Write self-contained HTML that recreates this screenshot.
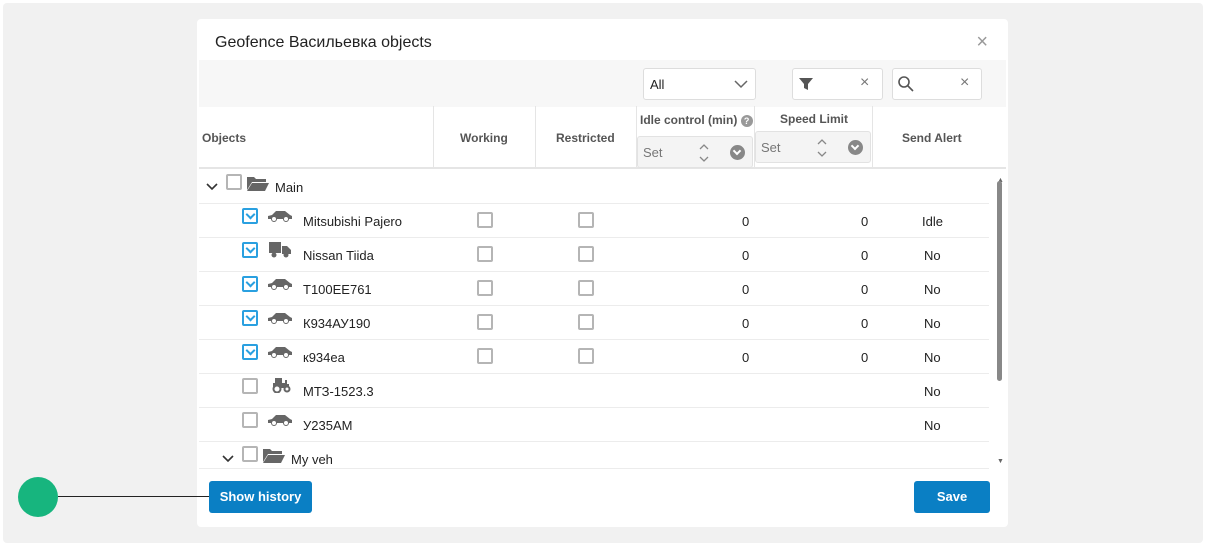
<!DOCTYPE html>
<html><head><meta charset="utf-8"><style>
*{box-sizing:border-box;margin:0;padding:0}
body{width:1206px;height:546px;background:#fff;font-family:"Liberation Sans",sans-serif;position:relative;overflow:hidden;color:#222}
.panel{position:absolute;left:3px;top:3px;width:1200px;height:540px;background:#f1f1f1;border-radius:4px}
.modal{position:absolute;left:197px;top:19px;width:811px;height:508px;background:#fff;border-radius:4px}
.abs{position:absolute}
.title{left:18px;top:15px;font-size:16px;color:#222}
.close{right:20px;top:12px;font-size:20px;color:#999}
.tool{left:2px;top:41px;width:807px;height:47px;background:#f7f7f7}
.box{position:absolute;background:#fff;border:1px solid #ddd;border-radius:3px;height:32px;top:49px}
.hdr{left:2px;top:87px;width:807px;height:63px;border-bottom:2px solid #e5e5e5}
.hc{position:absolute;font-size:12px;color:#555;font-weight:bold}
.vl{position:absolute;top:87px;height:62px;width:1px;background:#e5e5e5}
.set{position:absolute;background:#f4f4f4;border:1px solid #e2e2e2;border-radius:3px;height:32px;font-size:13px;color:#777}
.row{position:absolute;left:2px;width:790px;height:34px;border-bottom:1px solid #ececec;font-size:13px}
.cb{position:absolute;width:16px;height:16px;border:2px solid #b5b5b5;border-radius:2px;background:#fff}
.cbc{border-color:#2aa0e0}
.cbc::after{content:"";position:absolute;left:3px;top:1px;width:5px;height:5px;border-right:2px solid #2aa0e0;border-bottom:2px solid #2aa0e0;transform:rotate(45deg)}
.btn{position:absolute;background:#0a7fc4;color:#fff;font-size:13px;font-weight:bold;border-radius:3px;text-align:center;line-height:32px;height:32px}
.ud{position:absolute;left:60px;top:6px}
.dc{position:absolute;left:92px;top:8px;width:15px;height:15px;border-radius:50%;background:#888}
.dc::after{content:"";position:absolute;left:4px;top:3px;width:4px;height:4px;border-right:2px solid #fff;border-bottom:2px solid #fff;transform:rotate(45deg)}
</style></head><body>
<div class="panel"></div>
<div class="modal">
<div class="abs title">Geofence Васильевка objects</div>
<div class="abs close">×</div>
<div class="abs tool"></div>
<div class="box" style="left:446px;width:113px"><span class="abs" style="left:6px;top:8px;font-size:13px">All</span><svg class="abs" style="left:90px;top:10px" width="14" height="10"><path d="M1 2l6 6 6-6" stroke="#666" fill="none" stroke-width="1.5"/></svg></div>
<div class="box" style="left:595px;width:91px"><svg class="abs" style="left:6px;top:8px" width="14" height="14"><path d="M0 1h14l-5 6v6l-4-2v-4z" fill="#555"/></svg><span class="abs" style="left:67px;top:5px;color:#777;font-size:16px">×</span></div>
<div class="box" style="left:695px;width:90px"><svg class="abs" style="left:5px;top:7px" width="16" height="16"><circle cx="6" cy="6" r="5" stroke="#555" stroke-width="1.6" fill="none"/><path d="M10 10l5 5" stroke="#555" stroke-width="1.6"/></svg><span class="abs" style="left:67px;top:5px;color:#777;font-size:16px">×</span></div>
<div class="abs hdr"></div>
<div class="vl" style="left:236px"></div><div class="vl" style="left:338px"></div><div class="vl" style="left:439px"></div><div class="vl" style="left:557px"></div><div class="vl" style="left:675px"></div>
<div class="hc" style="left:5px;top:112px">Objects</div>
<div class="hc" style="left:263px;top:112px">Working</div>
<div class="hc" style="left:359px;top:112px">Restricted</div>
<div class="hc" style="left:443px;top:94px">Idle control (min) <span style="display:inline-block;width:12px;height:12px;border-radius:50%;background:#999;color:#fff;font-size:9px;text-align:center;line-height:12px">?</span></div>
<div class="hc" style="left:583px;top:93px">Speed Limit</div>
<div class="hc" style="left:705px;top:112px">Send Alert</div>
<div class="set" style="left:440px;top:117px;width:116px"><span class="abs" style="left:5px;top:8px">Set</span><svg class="ud" width="12" height="20"><path d="M2 6l4-4 4 4M2 14l4 4 4-4" stroke="#888" fill="none" stroke-width="1.3"/></svg><span class="dc"></span></div>
<div class="set" style="left:558px;top:112px;width:116px"><span class="abs" style="left:5px;top:8px">Set</span><svg class="ud" width="12" height="20"><path d="M2 6l4-4 4 4M2 14l4 4 4-4" stroke="#888" fill="none" stroke-width="1.3"/></svg><span class="dc"></span></div>

<div class="row" style="top:151px"><svg class="abs" style="left:7px;top:13px" width="12" height="8"><path d="M1 1l5 5 5-5" stroke="#333" fill="none" stroke-width="1.6"/></svg><div class="cb" style="left:27px;top:4px"></div><svg class="abs" style="left:48px;top:5px" width="22" height="16"><path d="M0 2h7l2 2h10v3H5L0 15z M5 8h17l-4 8H0z" fill="#666"/></svg><span class="abs" style="left:76px;top:10px">Main</span></div>

<div class="row" style="top:185px"><div class="cb cbc" style="left:43px;top:4px"></div><svg class="abs" style="left:68px;top:6px" width="26" height="12"><path d="M1 9V6l4-1 4-4h9l5 4 2 1v3z" fill="#666"/><circle cx="7" cy="9" r="2.5" fill="#fff" stroke="#666"/><circle cx="19" cy="9" r="2.5" fill="#fff" stroke="#666"/></svg><span class="abs" style="left:104px;top:10px">Mitsubishi Pajero</span><div class="cb" style="left:278px;top:8px"></div><div class="cb" style="left:379px;top:8px"></div><span class="abs" style="left:543px;top:10px">0</span><span class="abs" style="left:662px;top:10px">0</span><span class="abs" style="left:723px;top:10px">Idle</span></div>

<div class="row" style="top:219px"><div class="cb cbc" style="left:43px;top:4px"></div><svg class="abs" style="left:70px;top:4px" width="22" height="16"><path d="M0 0h12v11H0z M13 4h5l4 4v4H13z" fill="#666"/><circle cx="5" cy="13" r="2.5" fill="#666"/><circle cx="17" cy="13" r="2.5" fill="#666"/></svg><span class="abs" style="left:104px;top:10px">Nissan Tiida</span><div class="cb" style="left:278px;top:8px"></div><div class="cb" style="left:379px;top:8px"></div><span class="abs" style="left:543px;top:10px">0</span><span class="abs" style="left:662px;top:10px">0</span><span class="abs" style="left:725px;top:10px">No</span></div>

<div class="row" style="top:253px"><div class="cb cbc" style="left:43px;top:4px"></div><svg class="abs" style="left:68px;top:6px" width="26" height="12"><path d="M1 9V6l4-1 4-4h9l5 4 2 1v3z" fill="#666"/><circle cx="7" cy="9" r="2.5" fill="#fff" stroke="#666"/><circle cx="19" cy="9" r="2.5" fill="#fff" stroke="#666"/></svg><span class="abs" style="left:104px;top:10px">T100EE761</span><div class="cb" style="left:278px;top:8px"></div><div class="cb" style="left:379px;top:8px"></div><span class="abs" style="left:543px;top:10px">0</span><span class="abs" style="left:662px;top:10px">0</span><span class="abs" style="left:725px;top:10px">No</span></div>

<div class="row" style="top:287px"><div class="cb cbc" style="left:43px;top:4px"></div><svg class="abs" style="left:68px;top:6px" width="26" height="12"><path d="M1 9V6l4-1 4-4h9l5 4 2 1v3z" fill="#666"/><circle cx="7" cy="9" r="2.5" fill="#fff" stroke="#666"/><circle cx="19" cy="9" r="2.5" fill="#fff" stroke="#666"/></svg><span class="abs" style="left:104px;top:10px">К934АУ190</span><div class="cb" style="left:278px;top:8px"></div><div class="cb" style="left:379px;top:8px"></div><span class="abs" style="left:543px;top:10px">0</span><span class="abs" style="left:662px;top:10px">0</span><span class="abs" style="left:725px;top:10px">No</span></div>

<div class="row" style="top:321px"><div class="cb cbc" style="left:43px;top:4px"></div><svg class="abs" style="left:68px;top:6px" width="26" height="12"><path d="M1 9V6l4-1 4-4h9l5 4 2 1v3z" fill="#666"/><circle cx="7" cy="9" r="2.5" fill="#fff" stroke="#666"/><circle cx="19" cy="9" r="2.5" fill="#fff" stroke="#666"/></svg><span class="abs" style="left:104px;top:10px">к934еа</span><div class="cb" style="left:278px;top:8px"></div><div class="cb" style="left:379px;top:8px"></div><span class="abs" style="left:543px;top:10px">0</span><span class="abs" style="left:662px;top:10px">0</span><span class="abs" style="left:725px;top:10px">No</span></div>

<div class="row" style="top:355px"><div class="cb" style="left:43px;top:4px"></div><svg class="abs" style="left:73px;top:3px" width="20" height="16"><path d="M3 1h7v5h3V3h2v4h2v4H1V6h2z" fill="#666"/><circle cx="5" cy="12" r="3.5" fill="#fff" stroke="#666" stroke-width="2"/><circle cx="15" cy="12" r="2.5" fill="#fff" stroke="#666" stroke-width="2"/></svg><span class="abs" style="left:104px;top:10px">МТЗ-1523.3</span><span class="abs" style="left:725px;top:10px">No</span></div>

<div class="row" style="top:389px"><div class="cb" style="left:43px;top:4px"></div><svg class="abs" style="left:68px;top:6px" width="26" height="12"><path d="M1 9V6l4-1 4-4h9l5 4 2 1v3z" fill="#666"/><circle cx="7" cy="9" r="2.5" fill="#fff" stroke="#666"/><circle cx="19" cy="9" r="2.5" fill="#fff" stroke="#666"/></svg><span class="abs" style="left:104px;top:10px">У235АМ</span><span class="abs" style="left:725px;top:10px">No</span></div>

<div class="row" style="top:423px;height:27px"><svg class="abs" style="left:23px;top:13px" width="12" height="8"><path d="M1 1l5 5 5-5" stroke="#333" fill="none" stroke-width="1.6"/></svg><div class="cb" style="left:43px;top:4px"></div><svg class="abs" style="left:64px;top:5px" width="22" height="16"><path d="M0 2h7l2 2h10v3H5L0 15z M5 8h17l-4 8H0z" fill="#666"/></svg><span class="abs" style="left:92px;top:10px">My veh</span></div>

<div class="abs" style="left:800px;top:158px;font-size:7px;color:#666">▲</div>
<div class="abs" style="left:800px;top:162px;width:5px;height:200px;background:#888;border-radius:3px"></div>
<div class="abs" style="left:800px;top:439px;font-size:7px;color:#666">▼</div>

<div class="btn" style="left:12px;top:462px;width:103px">Show history</div>
<div class="btn" style="left:717px;top:462px;width:76px">Save</div>
</div>
<div class="abs" style="left:18px;top:477px;width:40px;height:40px;border-radius:50%;background:#17b57e"></div>
<div class="abs" style="left:58px;top:496px;width:151px;height:1px;background:#222"></div>
</body></html>
